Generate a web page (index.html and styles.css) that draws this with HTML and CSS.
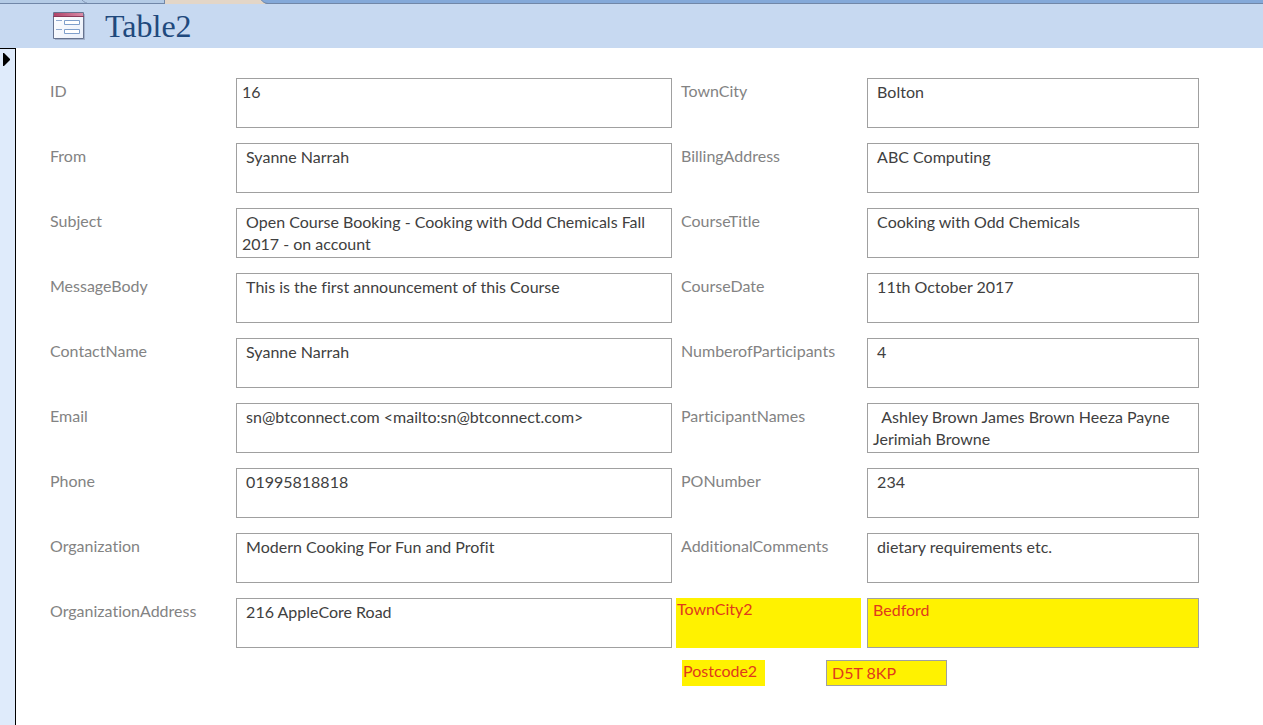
FILE: index.html
```html
<!DOCTYPE html>
<html lang="en">
<head>
    <meta charset="UTF-8">
    <meta name="viewport" content="width=device-width, initial-scale=1.0">
    <title>Table2</title>
    <link rel="stylesheet" href="styles.css">
</head>
<body>
    <div class="tab-strip">
        <svg width="268" height="4" viewBox="0 0 268 4" aria-hidden="true">
            <path d="M0 0H165V4H0Z" fill="#b4cbe6"/>
            <path d="M82 0C84 1 84 3 87 3" stroke="#8094b4" fill="none"/>
            <path d="M0 3.5H165M164.5 0V4" stroke="#7187a8" fill="none"/>
            <path d="M165 0H261C263 1 263 3 267 4H165Z" fill="#e3d6c8"/>
            <path d="M261 0C263 1 263 3 268 3.500" stroke="#7187a8" fill="none"/>
        </svg>
    </div>

    <header class="form-header">
        <svg class="form-icon" width="32" height="28" viewBox="0 0 32 28" aria-hidden="true">
            <defs>
                <linearGradient id="bar" x1="0" x2="1">
                    <stop offset="0" stop-color="#b04468"/>
                    <stop offset="1" stop-color="#d98aa6"/>
                </linearGradient>
                <linearGradient id="sheet" x1="0" y1="0" x2="1" y2="1">
                    <stop offset="0" stop-color="#fff"/>
                    <stop offset="1" stop-color="#e9effa"/>
                </linearGradient>
            </defs>
            <path d="M2 2H32V28H2Z" fill="#a3b2cb"/>
            <path d="M0.5 0.5H30.5V26.5H0.5Z" fill="url(#sheet)" stroke="#66738f"/>
            <path d="M1 1H30V4H1Z" fill="url(#bar)"/>
            <path d="M0 4.5H31" stroke="#8c3a5a"/>
            <path d="M3 8.500H9M3 17.500H9" stroke="#8fa9d0"/>
            <path d="M11.5 8.5H26.5V12.5H11.5ZM11.5 17.5H26.5V21.5H11.5Z" fill="#fff" stroke="#7f9fcb"/>
        </svg>
        <h1>Table2</h1>
    </header>

    <main class="record">
        <div class="record-selector">
            <svg width="10" height="14" viewBox="0 0 10 14" aria-hidden="true">
                <path d="M1 0H2L8 6V7L2 13H1Z" fill="#000"/>
            </svg>
        </div>

        <form class="form">
            <div class="column">
                <label for="id">ID</label>
                <textarea id="id">16</textarea>
                <label for="from">From</label>
                <textarea id="from"> Syanne Narrah</textarea>
                <label for="subject">Subject</label>
                <textarea id="subject"> Open Course Booking - Cooking with Odd Chemicals Fall 2017 - on account</textarea>
                <label for="messageBody">MessageBody</label>
                <textarea id="messageBody"> This is the first announcement of this Course</textarea>
                <label for="contactName">ContactName</label>
                <textarea id="contactName"> Syanne Narrah</textarea>
                <label for="email">Email</label>
                <textarea id="email"> sn@btconnect.com &lt;mailto:sn@btconnect.com&gt;</textarea>
                <label for="phone">Phone</label>
                <textarea id="phone"> 01995818818</textarea>
                <label for="organization">Organization</label>
                <textarea id="organization"> Modern Cooking For Fun and Profit</textarea>
                <label for="organizationAddress">OrganizationAddress</label>
                <textarea id="organizationAddress"> 216 AppleCore Road</textarea>
            </div>

            <div class="column">
                <label for="townCity">TownCity</label>
                <textarea id="townCity"> Bolton</textarea>
                <label for="billingAddress">BillingAddress</label>
                <textarea id="billingAddress"> ABC Computing</textarea>
                <label for="courseTitle">CourseTitle</label>
                <textarea id="courseTitle"> Cooking with Odd Chemicals</textarea>
                <label for="courseDate">CourseDate</label>
                <textarea id="courseDate"> 11th October 2017</textarea>
                <label for="numberOfParticipants">NumberofParticipants</label>
                <textarea id="numberOfParticipants"> 4</textarea>
                <label for="participantNames">ParticipantNames</label>
                <textarea id="participantNames">  Ashley Brown James Brown Heeza Payne Jerimiah Browne</textarea>
                <label for="poNumber">PONumber</label>
                <textarea id="poNumber"> 234</textarea>
                <label for="additionalComments">AdditionalComments</label>
                <textarea id="additionalComments"> dietary requirements etc.</textarea>
                <label class="highlight" for="townCity2">TownCity2</label>
                <textarea class="highlight" id="townCity2">Bedford</textarea>
                <div class="postcode">
                    <label class="highlight" for="postcode2">Postcode2</label>
                    <input class="highlight" type="text" id="postcode2" value="D5T 8KP">
                </div>
            </div>
        </form>
    </main>
</body>
</html>
```
FILE: styles.css
```css
:root {
    --header-bg: #c7d9f1;
    --title: #1f497d;
    --label: #838383;
    --text: #404040;
    --border: #a0a0a0;
    --yellow: #fff200;
    --red: #e03a1c;
}

* {
    margin: 0;
    padding: 0;
    box-sizing: border-box;
}

body {
    background: #fff;
    font-family: Lato, sans-serif;
    font-size: 16px;
    line-height: 22px;
    font-variant-ligatures: none;
    min-height: 100vh;
    display: flex;
    flex-direction: column;
}

.tab-strip {
    height: 4px;
    background: #84a9d9;
    border-bottom: 1px solid #7187a8;
}

.tab-strip svg {
    display: block;
}

.form-header {
    display: flex;
    align-items: center;
    gap: 20px;
    height: 44px;
    padding-left: 53px;
    background: var(--header-bg);
}

.form-header h1 {
    color: var(--title);
    font-family: "Liberation Serif", serif;
    font-size: 32px;
    font-weight: normal;
    line-height: 44px;
}

.record {
    flex: 1;
    display: flex;
}

.record-selector {
    width: 16px;
    padding: 4px 2px;
    background: #dfebfb;
    border-top: 1px solid #000;
    border-right: 1px solid #000;
}

.record-selector svg {
    display: block;
}

.form {
    flex: 1;
    display: grid;
    grid-template-columns: 622fr 523fr;
    align-items: start;
    gap: 4px;
    padding: 30px 64px 30px 34px;
}

.column {
    display: grid;
    grid-template-columns: 180px 1fr;
    gap: 15px 6px;
}

.column + .column {
    grid-template-columns: 185px 1fr;
}

label {
    color: var(--label);
    padding-top: 2px;
}

.column + .column label {
    padding-left: 5px;
}

textarea,
input {
    display: block;
    width: 100%;
    height: 50px;
    padding: 2px 5px;
    border: 1px solid var(--border);
    background: #fff;
    color: var(--text);
    font: inherit;
    font-variant-ligatures: none;
    resize: none;
    overflow: hidden;
}

.column .highlight {
    background: var(--yellow);
    color: var(--red);
}

.column + .column label.highlight {
    padding: 0 1px;
}

textarea.highlight,
input.highlight {
    padding-top: 0;
}

.postcode {
    grid-column: 1 / -1;
    display: flex;
    gap: 61px;
    margin-top: -3px;
    padding-left: 6px;
}

.postcode label {
    width: 83px;
    height: 26px;
}

.postcode input {
    width: 121px;
    height: 26px;
}
```
